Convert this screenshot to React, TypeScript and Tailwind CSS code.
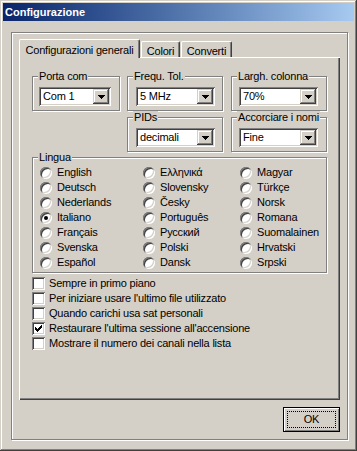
const raised =
  'shadow-[inset_-1px_-1px_0_#404040,inset_1px_1px_0_#d4d0c8,inset_-2px_-2px_0_#808080,inset_2px_2px_0_#fff]';
const sunken =
  'shadow-[inset_1px_1px_0_#808080,inset_-1px_-1px_0_#fff,inset_2px_2px_0_#404040,inset_-2px_-2px_0_#d4d0c8]';
const etched = 'border border-[#808080] shadow-[inset_1px_1px_0_#fff,1px_1px_0_#fff]';

const languages = [
  ['English', 'Ελληνικά', 'Magyar'],
  ['Deutsch', 'Slovensky', 'Türkçe'],
  ['Nederlands', 'Česky', 'Norsk'],
  ['Italiano', 'Português', 'Romana'],
  ['Français', 'Русский', 'Suomalainen'],
  ['Svenska', 'Polski', 'Hrvatski'],
  ['Español', 'Dansk', 'Srpski'],
];

const options = [
  { label: 'Sempre in primo piano', checked: false },
  { label: "Per iniziare usare l'ultimo file utilizzato", checked: false },
  { label: 'Quando carichi usa sat personali', checked: false },
  { label: "Restaurare l'ultima sessione all'accensione", checked: true },
  { label: 'Mostrare il numero dei canali nella lista', checked: false },
];

function Group({
  label,
  className,
  children,
}: {
  label: string;
  className: string;
  children?: React.ReactNode;
}) {
  return (
    <div className={`relative ${etched} ${className}`}>
      <span className="absolute left-[5px] -top-[7px] bg-[#d4d0c8] px-[1px] leading-[13px]">
        {label}
      </span>
      {children}
    </div>
  );
}

function Combo({ value, className }: { value: string; className: string }) {
  return (
    <div className={`flex h-[19px] bg-white p-[2px] ${sunken} ${className}`}>
      <span className="flex-1 pl-[2px] leading-[15px]">{value}</span>
      <span className={`flex w-[16px] items-center justify-center bg-[#d4d0c8] ${raised}`}>
        <svg width="7" height="4" shapeRendering="crispEdges">
          <rect x="0" y="0" width="7" height="1" />
          <rect x="1" y="1" width="5" height="1" />
          <rect x="2" y="2" width="3" height="1" />
          <rect x="3" y="3" width="1" height="1" />
        </svg>
      </span>
    </div>
  );
}

function Radio({ label, checked }: { label: string; checked: boolean }) {
  return (
    <div className="flex h-[15px] items-center gap-[5px]">
      <span
        className={`flex h-[12px] w-[12px] items-center justify-center rounded-full bg-white ${sunken}`}
      >
        {checked && <span className="h-[4px] w-[4px] rounded-full bg-black" />}
      </span>
      <span className="leading-[13px]">{label}</span>
    </div>
  );
}

function Check({ label, checked }: { label: string; checked: boolean }) {
  return (
    <div className="flex h-[15px] items-center gap-[4px]">
      <span className={`flex h-[13px] w-[13px] items-center justify-center bg-white ${sunken}`}>
        {checked && (
          <svg width="7" height="7" shapeRendering="crispEdges">
            <rect x="6" y="0" width="1" height="1" />
            <rect x="5" y="1" width="2" height="1" />
            <rect x="0" y="2" width="1" height="1" />
            <rect x="4" y="2" width="3" height="1" />
            <rect x="0" y="3" width="2" height="1" />
            <rect x="3" y="3" width="3" height="1" />
            <rect x="0" y="4" width="5" height="1" />
            <rect x="1" y="5" width="3" height="1" />
            <rect x="2" y="6" width="1" height="1" />
          </svg>
        )}
      </span>
      <span className="leading-[13px]">{label}</span>
    </div>
  );
}

export default function App() {
  return (
    <div
      className={`h-[451px] w-[357px] bg-[#d4d0c8] p-[3px] text-[11px] tracking-[-0.2px] text-black font-['Liberation_Sans',Arial,sans-serif] ${raised}`}
    >
      {/* barra del titolo */}
      <div className="h-[18px] bg-linear-to-r from-[#0a246a] to-[#a6caf0] pl-[2px] pt-[3px] font-bold leading-[13px] tracking-normal text-white">
        Configurazione
      </div>

      <div className={`ml-[8px] mt-[11px] h-[408px] w-[337px] pl-[7px] pt-[6px] ${etched}`}>
        {/* linguette */}
        <div className="flex h-[18px] items-end">
          <div className="relative z-10 -mb-[1px] h-[19px] w-[121px] rounded-t-[2px] border-l border-t border-r border-white border-r-[#404040] bg-[#d4d0c8] pt-[4px] text-center leading-[13px] shadow-[inset_-1px_0_0_#808080]">
            Configurazioni generali
          </div>
          <div className="ml-[1px] h-[16px] w-[39px] rounded-t-[2px] border-l border-t border-r border-white border-r-[#404040] pt-[3px] text-center leading-[13px] shadow-[inset_-1px_0_0_#808080]">
            Colori
          </div>
          <div className="ml-[1px] h-[16px] w-[51px] rounded-t-[2px] border-l border-t border-r border-white border-r-[#404040] pt-[3px] text-center leading-[13px] shadow-[inset_-1px_0_0_#808080]">
            Converti
          </div>
        </div>

        {/* pannello */}
        <div
          className="h-[343px] w-[321px] pl-[13px] pt-[19px] shadow-[inset_1px_1px_0_#fff,inset_-1px_-1px_0_#404040,inset_-2px_-2px_0_#808080]"
        >
          <div className="flex">
            <Group label="Porta com" className="h-[35px] w-[88px] pl-[6px] pt-[10px]">
              <Combo value="Com 1" className="w-[72px]" />
            </Group>
            <Group label="Frequ. Tol." className="ml-[7px] h-[35px] w-[96px] pl-[8px] pt-[10px]">
              <Combo value="5 MHz" className="w-[79px]" />
            </Group>
            <Group label="Largh. colonna" className="ml-[8px] h-[35px] w-[96px] pl-[7px] pt-[10px]">
              <Combo value="70%" className="w-[79px]" />
            </Group>
          </div>

          <div className="mt-[6px] flex pl-[95px]">
            <Group label="PIDs" className="h-[35px] w-[96px] pl-[8px] pt-[10px]">
              <Combo value="decimali" className="w-[79px]" />
            </Group>
            <Group label="Accorciare i nomi" className="ml-[8px] h-[35px] w-[96px] pl-[7px] pt-[10px]">
              <Combo value="Fine" className="w-[79px]" />
            </Group>
          </div>

          <Group label="Lingua" className="mt-[5px] h-[116px] w-[295px] pl-[7px] pt-[7px]">
            <div className="grid grid-cols-[103px_97px_1fr]">
              {languages.flat().map((l) => (
                <Radio key={l} label={l} checked={l === 'Italiano'} />
              ))}
            </div>
          </Group>

          <div className="mt-[3px] flex flex-col">
            {options.map((o) => (
              <Check key={o.label} label={o.label} checked={o.checked} />
            ))}
          </div>
        </div>

        <div className="mt-[7px] flex w-[321px] justify-end">
          <button className="h-[25px] w-[57px] border border-black p-[3px] shadow-[inset_1px_1px_0_#fff,inset_-1px_-1px_0_#808080]">
            <div className="flex h-full w-full items-center justify-center border border-dotted border-black leading-[13px]">
              OK
            </div>
          </button>
        </div>
      </div>
    </div>
  );
}
